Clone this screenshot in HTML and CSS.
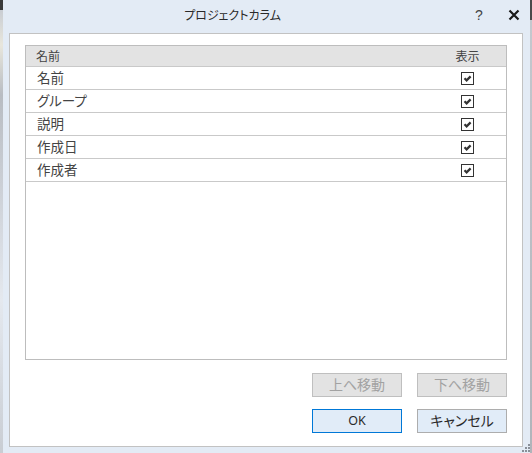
FILE: index.html
```html
<!DOCTYPE html>
<html lang="ja">
<head>
  <meta charset="UTF-8">
  <title>プロジェクトカラム</title>
  <link rel="stylesheet" href="styles.css">
</head>
<body>
  <div class="screen">
    <div class="edge edge-left"></div>

    <div class="dialog">
      <div class="titlebar">
        <div class="title">プロジェクトカラム</div>
        <div class="title-btn help">?</div>
        <div class="title-btn close">
          <svg width="12" height="12" viewBox="0 0 12 12">
            <path d="M1.5 1.5 L10.5 10.5 M10.5 1.5 L1.5 10.5" stroke="#1a1a1a" stroke-width="2.2" fill="none"/>
          </svg>
        </div>
      </div>

      <div class="panel">
        <div class="listbox">
          <div class="list-header">
            <span class="col-name">名前</span>
            <span class="col-show">表示</span>
          </div>
          <div class="list-row"><span class="col-name">名前</span><span class="col-show"><span class="check"></span></span></div>
          <div class="list-row"><span class="col-name">グループ</span><span class="col-show"><span class="check"></span></span></div>
          <div class="list-row"><span class="col-name">説明</span><span class="col-show"><span class="check"></span></span></div>
          <div class="list-row"><span class="col-name">作成日</span><span class="col-show"><span class="check"></span></span></div>
          <div class="list-row"><span class="col-name">作成者</span><span class="col-show"><span class="check"></span></span></div>
        </div>

        <div class="button-row">
          <button class="btn" disabled>上へ移動</button>
          <button class="btn" disabled>下へ移動</button>
        </div>
        <div class="button-row second">
          <button class="btn btn-default">OK</button>
          <button class="btn btn-cancel">キャンセル</button>
        </div>
      </div>

      <div class="grip">
        <svg width="8" height="8" viewBox="0 0 8 8">
          <rect x="6" y="0" width="2" height="2" fill="#8a9099"/>
          <rect x="3" y="3" width="2" height="2" fill="#8a9099"/>
          <rect x="6" y="3" width="2" height="2" fill="#8a9099"/>
          <rect x="0" y="6" width="2" height="2" fill="#8a9099"/>
          <rect x="3" y="6" width="2" height="2" fill="#8a9099"/>
          <rect x="6" y="6" width="2" height="2" fill="#8a9099"/>
        </svg>
      </div>
    </div>

    <div class="edge edge-right"></div>
  </div>
</body>
</html>
```

FILE: styles.css
```css
body {
  margin: 0;
  font-family: "Noto Sans CJK JP", "Noto Sans", sans-serif;
  font-feature-settings: "palt";
  color: #333;
  background: #d4d8de;
}

.screen {
  display: flex;
  width: 532px;
  height: 453px;
  overflow: hidden;
}

.edge {
  flex: none;
  width: 3px;
  background: linear-gradient(to bottom, #3a3a3a 0, #3a3a3a 10px, #c9cdd3 10px, #e8e6dc 45px, #b8bcc2 95px, #e4e8ee 300px, #c9cdd3 453px);
}

.edge-right {
  width: 2px;
  background: linear-gradient(to bottom, #4a4a4a 0, #4a4a4a 20px, #c4c8ce 20px, #b0b4ba 453px);
}

.dialog {
  position: relative;
  flex: 1;
  display: flex;
  flex-direction: column;
  background: #e3ebf5;
  padding: 0 7px 6px 6px;
}

/* title bar */
.titlebar {
  display: flex;
  align-items: center;
  height: 33px;
  flex: none;
}

.title {
  flex: 1;
  text-align: center;
  font-size: 12px;
  color: #2a2a2a;
  padding-right: 8px;
  margin-top: -4px;
}

.title-btn {
  width: 30px;
  text-align: center;
  margin-top: -4px;
}

.help {
  font-family: "Liberation Sans", sans-serif;
  font-size: 14px;
  color: #444;
  margin-right: 5px;
}

.close {
  display: flex;
  justify-content: center;
  margin-right: -6px;
}

/* white panel */
.panel {
  flex: 1;
  background: #fff;
  border: 1px solid #c2c2c2;
  padding: 11px 15px 0 15px;
}

.listbox {
  height: 313px;
  border: 1px solid #bdbdbd;
}

.list-header,
.list-row {
  display: flex;
  align-items: center;
  border-bottom: 1px solid #c9c9c9;
  box-sizing: border-box;
}

.list-header {
  height: 21px;
  padding-bottom: 2px;
  background: #e3e3e3;
  font-size: 12px;
  color: #444;
}

.list-row {
  height: 23px;
  padding-bottom: 3px;
  font-size: 13.5px;
  color: #444;
}

.col-name {
  flex: 1;
  padding-left: 11px;
}

.list-header .col-name {
  padding-left: 10px;
}

.col-show {
  width: 57px;
  padding-right: 10px;
  display: flex;
  justify-content: center;
}

.list-row .col-show {
  padding-top: 3px;
}

.check {
  display: block;
  width: 11px;
  height: 11px;
  border: 1px solid #333;
  background: #fff url("data:image/svg+xml,%3Csvg xmlns='http://www.w3.org/2000/svg' width='11' height='11' viewBox='0 0 11 11'%3E%3Cpath d='M2.5 5.3 L4.6 7.4 L8.6 3.4' stroke='%23333' stroke-width='2.2' fill='none'/%3E%3C/svg%3E") no-repeat center;
}

/* buttons */
.button-row {
  display: flex;
  justify-content: flex-end;
  gap: 15px;
  margin-top: 13px;
}

.button-row.second {
  margin-top: 12px;
}

.btn {
  width: 90px;
  height: 24px;
  margin: 0;
  font-family: "Noto Sans CJK JP", "Noto Sans", sans-serif;
  font-feature-settings: "palt";
  font-size: 14px;
  color: #2a2a2a;
  background: #e1e1e1;
  border: 1px solid #adadad;
  padding: 0 0 2px;
  line-height: 20px;
}

.btn:disabled {
  color: #a2a2a2;
  background: #e3e3e3;
  border-color: #bfbfbf;
}

.btn-default {
  font-family: "Noto Sans", sans-serif;
  font-size: 12.5px;
  padding: 0;
  background: #e1ecf8;
  border-color: #0078d7;
}

.btn-cancel {
  background: #e1ecf8;
  border-color: #adadad;
}

.grip {
  position: absolute;
  right: 0;
  bottom: 1px;
  line-height: 0;
}
```
